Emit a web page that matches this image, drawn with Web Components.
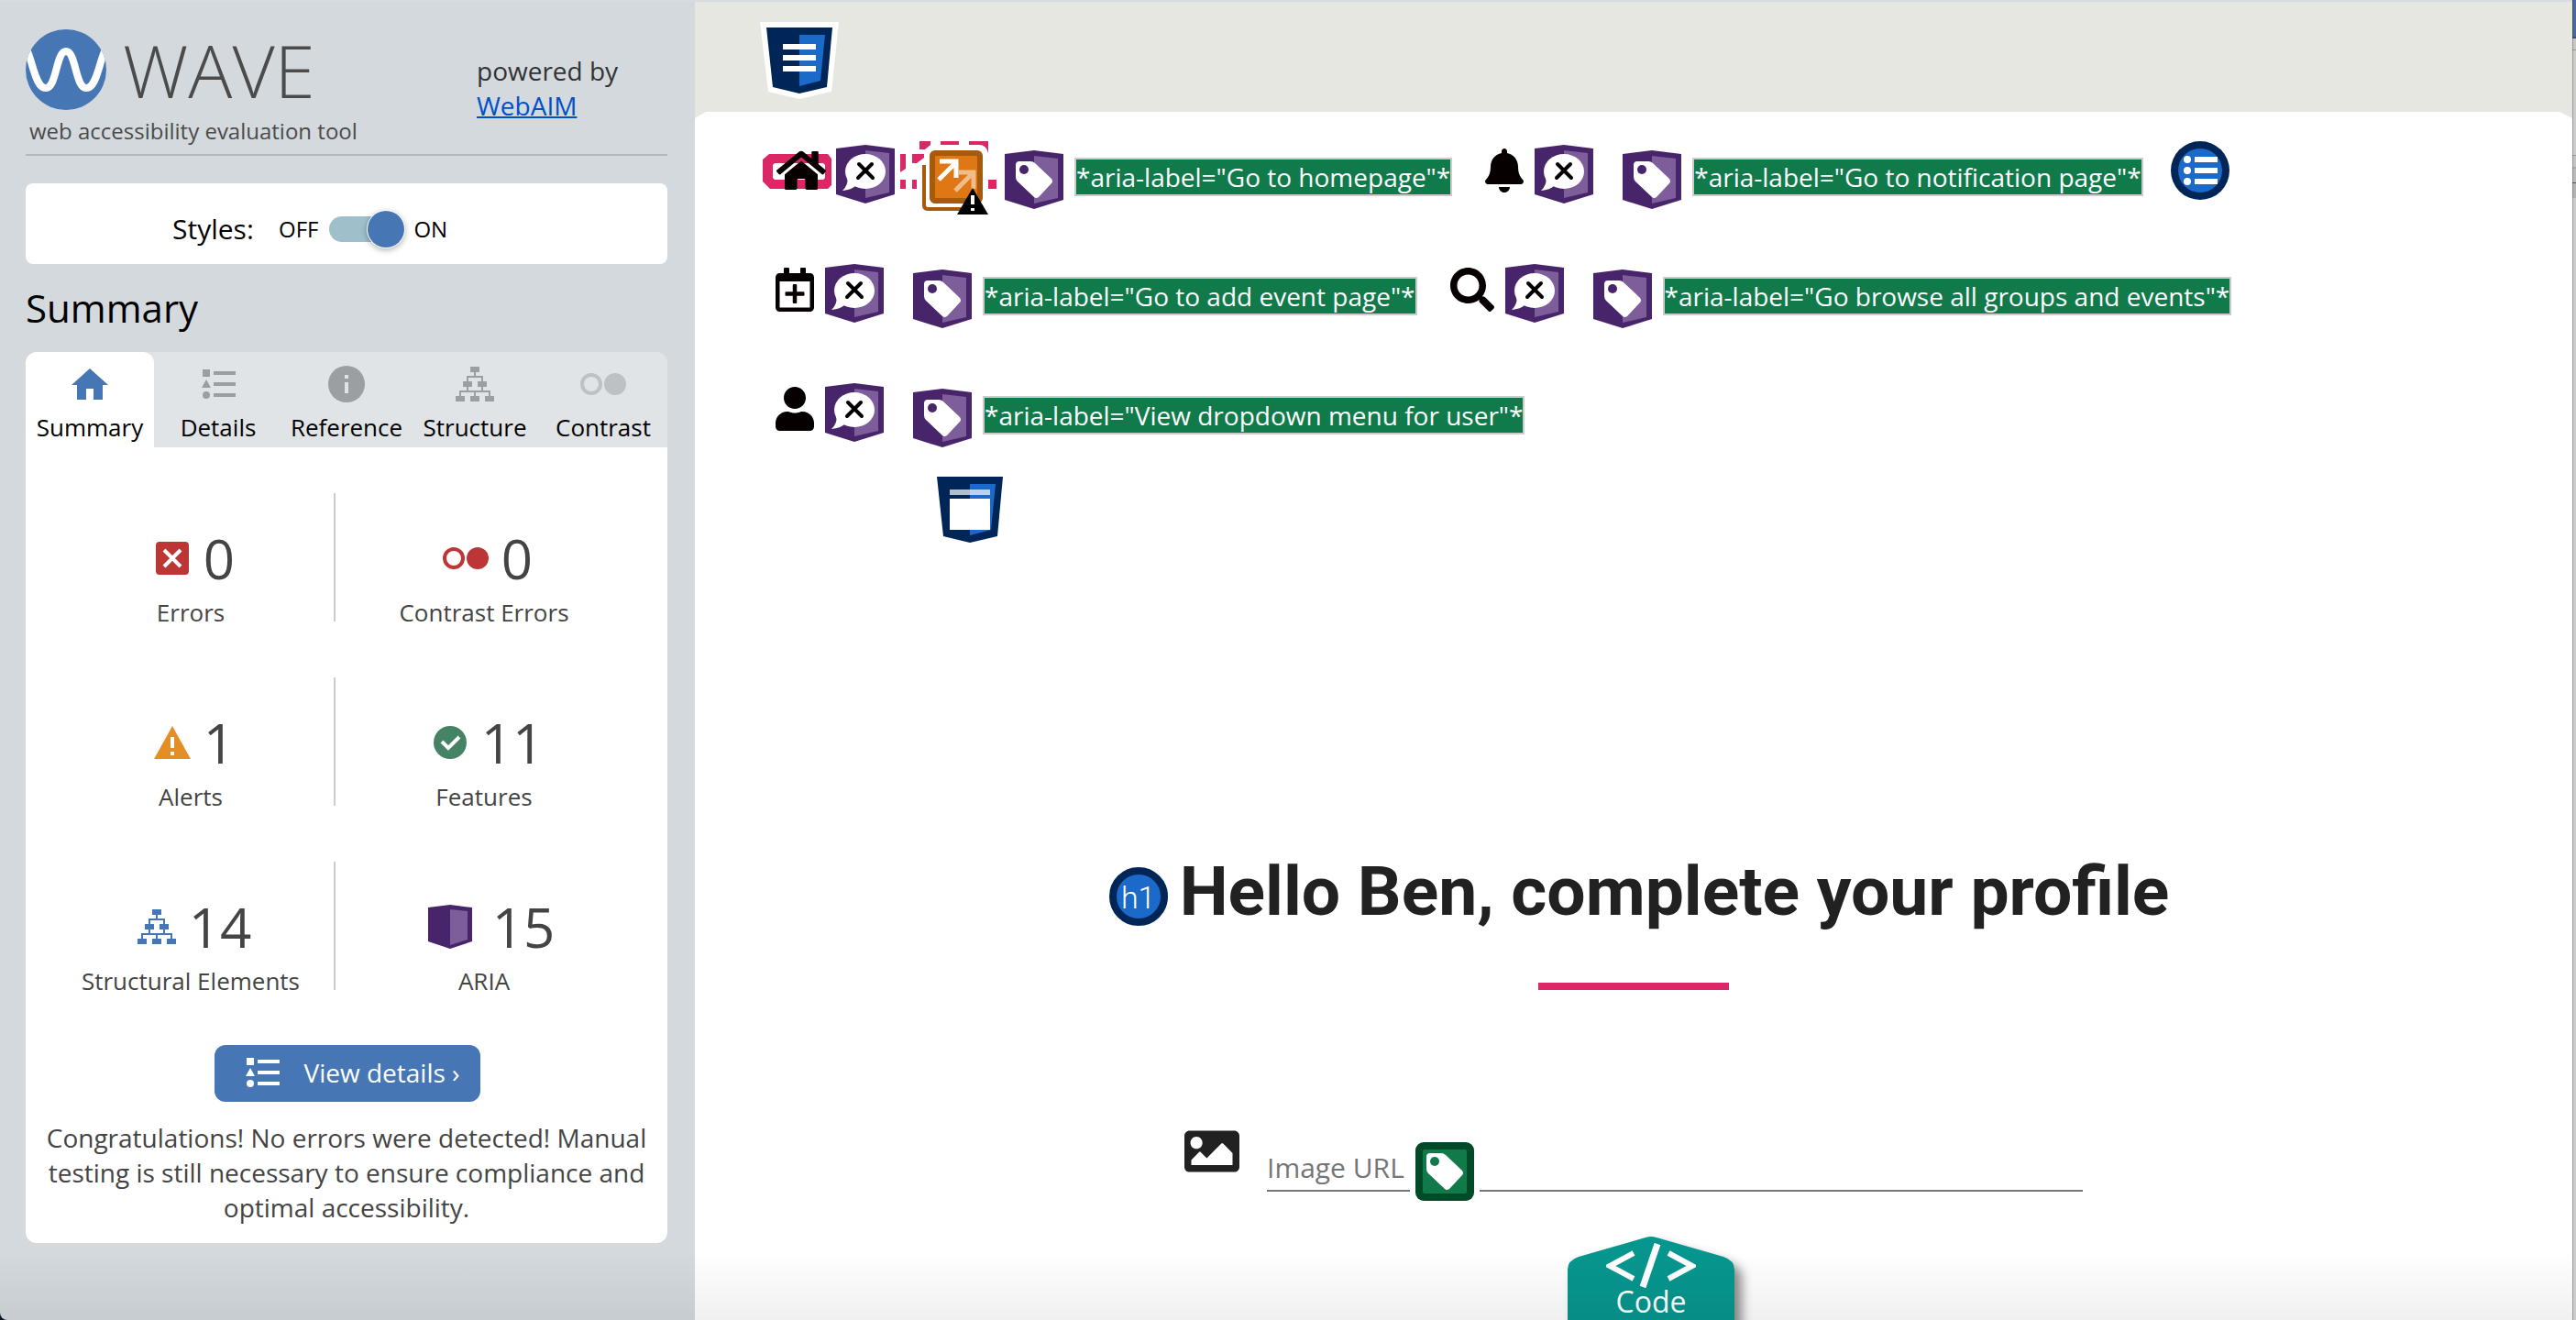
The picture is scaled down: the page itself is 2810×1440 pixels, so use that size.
<!DOCTYPE html>
<html lang="en">
<head>
<meta charset="utf-8">
<title>WAVE Web Accessibility Evaluation Tool</title>
<style>
html, body { margin: 0; }
body { font-family: "Open Sans", sans-serif; background: #0b1730; overflow: hidden; }
</style>
</head>
<body>
<wave-app></wave-app>
<script>
const TREE = '<path fill="currentColor" d="M16 0h10v6H16zM8 16h10v6H8zM24 16h10v6H24zM0 32h10v6H0zM16 32h10v6H16zM32 32h10v6H32z"/><path fill="none" stroke="currentColor" stroke-width="2" d="M21 6v5M13 16v-5h16v5M13 22v5M29 22v5M5 32v-5h32v5M21 27v5"/>';
const LIST = '<path fill="currentColor" d="M1 0h8v8H1zM5 11l5 9H0zM13 2h24v4H13zM13 14h24v4H13zM13 26h24v4H13z"/><circle cx="5" cy="28" r="4" fill="currentColor"/>';
const DUO = '<circle cx="12" cy="12" r="10" fill="none" stroke="currentColor" stroke-width="4"/><circle cx="38" cy="12" r="12" fill="currentColor"/>';
const SHIELD = '<path fill="#48246a" d="M0 4L32 0l32 4v50L32 64 0 54z"/><path fill="#7e5d9b" d="M32 6l26 3v43l-26 6z"/>';
const POCKET = '<path fill="#002657" d="M0 0h72l-6 65-30 7-29-7z"/><path fill="#1b6ac9" d="M36 8h28l-5 50-23 6z"/>';
const TAG = '<path fill="#fff" fill-rule="evenodd" d="M16 12h12q3 0 5 2l18 17q2 3 0 5L37 51q-3 2-5 0L14 34q-2-2-2-5V16q0-4 4-4z"/>';
const HOUSE = '<path fill="#060000" d="M280.37 148.26L96 300.11V464a16 16 0 0 0 16 16l112.06-.29a16 16 0 0 0 15.92-16V368a16 16 0 0 1 16-16h64a16 16 0 0 1 16 16v95.64a16 16 0 0 0 16 16.05L464 480a16 16 0 0 0 16-16V300L295.67 148.26a12.19 12.19 0 0 0-15.3 0zM571.6 251.47L488 182.56V44.05a12 12 0 0 0-12-12h-56a12 12 0 0 0-12 12v72.61L318.47 43a48 48 0 0 0-61 0L4.34 251.47a12 12 0 0 0-1.6 16.9l25.5 31A12 12 0 0 0 45.15 301l235.22-193.74a12.19 12.19 0 0 1 15.3 0L530.9 301a12 12 0 0 0 16.9-1.6l25.5-31a12 12 0 0 0-1.7-16.93z"/>';
// name: [width, height, viewBox, markup]
const ICONS = {
  logo: [88, 88, '0 0 88 88', '<clipPath id="c"><circle cx="44" cy="44" r="44"/></clipPath><circle cx="44" cy="44" r="44" fill="#4677b4"/><path clip-path="url(#c)" fill="none" stroke="#fff" stroke-width="8" d="M0 20C8 34 10 64 22 64S33 24 44 24s10 40 22 40S80 34 88 20"/>'],
  home: [40, 34, '0 0 40 34', '<path fill="currentColor" d="M20 0l20 18h-6v16H24V22h-8v12H6V18H0z"/>'],
  list: [37, 32, '0 0 37 32', LIST],
  info: [40, 40, '0 0 40 40', '<circle cx="20" cy="20" r="20" fill="currentColor"/><path fill="#e0e4e7" d="M18 10h4v4h-4zM18 18h4v12h-4z"/>'],
  tree: [42, 38, '0 0 42 38', TREE],
  duo: [50, 24, '0 0 50 24', DUO],
  error: [40, 36, '0 0 40 36', '<rect x="2" width="36" height="36" rx="4" fill="#bd3636"/><path stroke="#fff" stroke-width="4" d="M11 9l18 18M29 9L11 27"/>'],
  alert: [40, 36, '0 0 40 36', '<path fill="#e48f25" d="M20 0l20 36H0z"/><path fill="#fff" d="M18 12h4v12h-4zM18 28h4v4h-4z"/>'],
  check: [40, 36, '0 0 40 36', '<circle cx="20" cy="18" r="18" fill="#448465"/><path fill="none" stroke="#fff" stroke-width="4" d="M11 17l7 7 12-12"/>'],
  aria: [64, 48, '-8 0 64 48', '<path fill="#48246a" d="M0 3l24-3 24 3v37l-24 8-24-8z"/><path fill="#7e5d9b" d="M24 5l19 2v31l-19 6z"/>'],
  header: [86, 84, '0 0 86 84', '<path fill="#fff" d="M0 0h86l-8 76-35 8-34-8z"/><g transform="translate(7 6)">' + POCKET + '<path fill="#fff" d="M18 18h36v6H18zM18 30h36v6H18zM18 42h36v6H18z"/></g>'],
  nav: [72, 72, '0 0 72 72', POCKET + '<path fill="#fff" fill-opacity=".7" d="M14 14h44v6H14z"/><path fill="#fff" d="M14 24h44v34H14z"/>'],
  hidden: [64, 64, '0 0 64 64', SHIELD + '<ellipse cx="32" cy="29" rx="22" ry="19" fill="#fff"/><path fill="#fff" d="M12 36q2 7-5 14 10-1 14-5z"/><path stroke="#000" stroke-width="4" stroke-linecap="round" d="M25 21l15 15M39 21L24 36"/>'],
  label: [64, 64, '0 0 64 64', SHIELD + TAG + '<circle cx="21" cy="21" r="5" fill="#48246a"/>'],
  field: [64, 64, '0 0 64 64', '<rect width="64" height="64" rx="9" fill="#004a2a"/><rect x="8" y="8" width="48" height="48" rx="2" fill="#107a4b"/>' + TAG + '<circle cx="21" cy="21" r="5" fill="#107a4b"/>'],
  menu: [64, 64, '0 0 64 64', '<circle cx="32" cy="32" r="32" fill="#002657"/><circle cx="32" cy="32" r="24" fill="#1b6ac9"/><path fill="#fff" d="M26 17h25v6H26zM26 29h25v6H26zM26 41h25v6H26z"/><g fill="#fff"><circle cx="18" cy="20" r="4"/><circle cx="18" cy="32" r="4"/><circle cx="18" cy="44" r="4"/></g>'],
  brand: [75, 48, '0 0 75 48', '<path fill="#dc2767" fill-rule="evenodd" d="M7 6h64l4 5v29l-4 4H8l-8-8V12zM13 16l-2 2v14l2 2h53l2-2V18l-2-2z"/><svg x="15" width="54" height="48" viewBox="0 0 576 512">' + HOUSE + '</svg>'],
  redundant: [106, 86, '0 0 106 86', '<path fill="#dc2767" d="M0 18h6v16l-6 4zM13 18h13v4l-8 6h-5zM21 4h12v4l-6 5h-6zM44 4h20v4H44zM75 4h21v13q-2-9-10-9H75zM0 46h6v10H0zM13 46h5v10h-5zM96 46h9v10h-9z"/><path fill="none" stroke="#a55a0e" stroke-width="4" d="M26 30v44q0 4 5 4h40"/><rect x="32" y="14" width="58" height="58" rx="6" fill="#a55a0e"/><rect x="38" y="20" width="46" height="46" rx="1" fill="#df7814"/><path fill="none" stroke="#fff" stroke-width="5" d="M42 46l19-19M43 26h18v18"/><path opacity=".5" fill="none" stroke="#fff" stroke-width="5" d="M60 58l19-19M64 38h16v18"/><path d="M79 55l17 29H62z"/><path fill="#fff" d="M77 63h4v10h-4zM77 77h4v3h-4z"/>'],
  bell: [42, 48, '0 0 448 512', '<path fill="#060000" d="M224 512c35.32 0 63.97-28.65 63.97-64H160.03c0 35.35 28.65 64 63.97 64zm215.39-149.71c-19.32-20.76-55.47-51.99-55.47-154.29 0-77.7-54.48-139.9-127.94-155.16V32c0-17.67-14.32-32-31.98-32s-31.98 14.33-31.98 32v20.84C118.56 68.1 64.08 130.3 64.08 208c0 102.3-36.15 133.53-55.47 154.29-6 6.45-8.66 14.16-8.61 21.71.11 16.4 12.98 32 32.1 32h383.8c19.12 0 32-15.6 32.1-32 .05-7.55-2.61-15.27-8.61-21.71z"/>'],
  calendar: [42, 48, '0 0 448 512', '<path fill="#060000" d="M336 292v24c0 6.6-5.4 12-12 12h-76v76c0 6.6-5.4 12-12 12h-24c-6.6 0-12-5.4-12-12v-76h-76c-6.6 0-12-5.4-12-12v-24c0-6.6 5.4-12 12-12h76v-76c0-6.6 5.4-12 12-12h24c6.6 0 12 5.4 12 12v76h76c6.6 0 12 5.4 12 12zm112-180v352c0 26.5-21.5 48-48 48H48c-26.5 0-48-21.5-48-48V112c0-26.5 21.5-48 48-48h48V12c0-6.6 5.4-12 12-12h40c6.6 0 12 5.4 12 12v52h128V12c0-6.6 5.4-12 12-12h40c6.6 0 12 5.4 12 12v52h48c26.5 0 48 21.5 48 48zm-48 346V160H48v298c0 3.3 2.7 6 6 6h340c3.3 0 6-2.7 6-6z"/>'],
  search: [48, 48, '0 0 512 512', '<path fill="#060000" d="M505 442.7L405.3 343c-4.5-4.5-10.6-7-17-7H372c27.6-35.3 44-79.7 44-128C416 93.1 322.9 0 208 0S0 93.1 0 208s93.1 208 208 208c48.3 0 92.7-16.4 128-44v16.3c0 6.4 2.5 12.5 7 17l99.7 99.7c9.4 9.4 24.6 9.4 33.9 0l28.3-28.3c9.4-9.4 9.4-24.6.1-34zM208 336c-70.7 0-128-57.2-128-128 0-70.7 57.2-128 128-128 70.7 0 128 57.2 128 128 0 70.7-57.2 128-128 128z"/>'],
  user: [42, 48, '0 0 448 512', '<path fill="#060000" d="M224 256c70.7 0 128-57.3 128-128S294.7 0 224 0 96 57.3 96 128s57.3 128 128 128zm89.6 32h-16.7c-22.2 10.2-46.9 16-72.9 16s-50.6-5.8-72.9-16h-16.7C60.2 288 0 348.2 0 422.4V464c0 26.5 21.5 48 48 48h352c26.5 0 48-21.5 48-48v-41.6c0-74.2-60.2-134.4-134.4-134.4z"/>'],
  image: [60, 60, '0 0 512 512', '<path fill="#212121" d="M464 448H48c-26.51 0-48-21.49-48-48V112c0-26.51 21.49-48 48-48h416c26.51 0 48 21.49 48 48v288c0 26.51-21.49 48-48 48zM112 120c-30.928 0-56 25.072-56 56s25.072 56 56 56 56-25.072 56-56-25.072-56-56-56zM64 384h384V272l-87.515-87.515c-4.686-4.686-12.284-4.686-16.971 0L208 320l-55.515-55.515c-4.686-4.686-12.284-4.686-16.971 0L64 336v48z"/>'],
  code: [98, 50, '0 0 98 50', '<path fill="none" stroke="#fff" stroke-width="6" d="M30 11L4 25l26 14M68 11l26 14-26 14"/><path stroke="#fff" stroke-width="7" d="M40 48L56 1"/>']
};

function define(name, html) {
  const t = document.createElement('template');
  t.innerHTML = html;
  customElements.define(name, class extends HTMLElement {
    constructor() {
      super();
      this.attachShadow({ mode: 'open' }).append(t.content.cloneNode(true));
    }
  });
}

customElements.define('wave-icon', class extends HTMLElement {
  connectedCallback() {
    if (this.shadowRoot) return;
    const [w, h, box, body] = ICONS[this.getAttribute('name')];
    this.attachShadow({ mode: 'open' }).innerHTML =
      '<style>:host{display:inline-flex;flex:none}svg{display:block}</style>' +
      '<svg width="' + w + '" height="' + h + '" viewBox="' + box + '" aria-hidden="true">' + body + '</svg>';
  }
});

define('wave-brand', `<style>
:host { display: flex; border-bottom: 2px solid #b3b8bc; padding: 30px 0 8px; color: #4b4b4b; }
.name { width: 492px; }
.row { display: flex; align-items: center; gap: 18px; }
.word { font-size: 80px; font-weight: 300; line-height: 88px; }
p { margin: 0; }
.tagline { font-size: 24px; line-height: 34px; margin: 6px 0 0 4px; }
.by { font-size: 28px; line-height: 38px; color: #333; padding-top: 26px; }
a { color: #0050c8; text-decoration-thickness: 2px; }
</style>
<div class="name"><div class="row"><wave-icon name="logo"></wave-icon><span class="word">WAVE</span></div>
<p class="tagline">web accessibility evaluation tool</p></div>
<p class="by">powered by<br><a href="#webaim">WebAIM</a></p>`);

define('wave-toggle', `<style>
:host { display: flex; align-items: center; background: #fff; border-radius: 8px; height: 78px; padding: 10px 0 0 160px; margin-top: 30px; color: #000; }
label { font-size: 30px; width: 116px; }
span { font-size: 24px; }
input { appearance: none; margin: 2px 10px 0 12px; width: 82px; height: 40px; position: relative; }
input::before { content: ""; position: absolute; inset: 6px 10px 6px 0; border-radius: 14px; background: #9fbfca; }
input::after { content: ""; position: absolute; top: 0; right: 0; width: 40px; height: 40px; border-radius: 50%; background: #4677b4; box-shadow: 0 0 0 1px #fff, 0 2px 6px 1px rgba(0,0,0,.3); }
</style>
<label for="styles">Styles:</label><span>OFF</span><input id="styles" type="checkbox" role="switch" checked><span>ON</span>`);

define('wave-tab', `<style>
:host { display: block; flex: 1; color: #9b9fa1; }
:host([selected]) { color: #4677b4; }
:host([soft]) { color: #bcc1c4; }
button { width: 100%; border: 0; padding: 11px 0 4px; background: none; font: inherit; font-size: 26px; line-height: 36px; color: inherit; display: flex; flex-direction: column; align-items: center; gap: 5px; border-radius: 12px 12px 0 0; }
:host([selected]) button { background: #fff; }
.pic { display: flex; height: 48px; align-items: center; }
.text { color: #000; }
</style>
<button type="button"><span class="pic"><slot name="icon"></slot></span><span class="text"><slot></slot></span></button>`);

define('wave-stat', `<style>
:host { display: block; height: 99px; padding-top: 41px; text-align: center; color: #444; }
:host([line]) { border-right: 2px solid #ccc; margin-right: 2px; padding-left: 4px; }
.row { display: flex; justify-content: center; align-items: center; gap: 14px; padding-left: 8px; font-size: 60px; line-height: 60px; }
.text { font-size: 26px; line-height: 36px; margin-top: 11px; }
</style>
<div class="row"><slot name="icon"></slot><slot name="count"></slot></div><div class="text"><slot></slot></div>`);

define('wave-summary', `<style>
:host { display: block; }
h2 { margin: 20px 0; font-size: 42px; line-height: 56px; font-weight: 400; color: #000; }
nav { display: flex; background: #e0e4e7; border-radius: 12px 12px 0 0; }
.panel { background: #fff; border-radius: 0 0 12px 12px; padding: 50px 20px 20px; text-align: center; }
.stats { display: grid; grid-template-columns: 1fr 1fr; row-gap: 61px; margin-right: 20px; }
.red { color: #bd3636; } .blue { color: #4677b4; }
button { margin: 60px 0 0 2px; height: 62px; border: 0; border-radius: 12px; background: #4677b4; color: #fff; font: inherit; font-size: 28px; padding: 0 22px 2px 34px; display: inline-flex; align-items: center; gap: 26px; }
p { margin: 20px 0 0; font-size: 28px; line-height: 38px; color: #444; }
</style>
<h2>Summary</h2>
<nav>
<wave-tab selected><wave-icon slot="icon" name="home"></wave-icon>Summary</wave-tab>
<wave-tab><wave-icon slot="icon" name="list"></wave-icon>Details</wave-tab>
<wave-tab><wave-icon slot="icon" name="info"></wave-icon>Reference</wave-tab>
<wave-tab><wave-icon slot="icon" name="tree"></wave-icon>Structure</wave-tab>
<wave-tab soft><wave-icon slot="icon" name="duo"></wave-icon>Contrast</wave-tab>
</nav>
<div class="panel">
<div class="stats">
<wave-stat line><wave-icon slot="icon" name="error"></wave-icon><span slot="count">0</span>Errors</wave-stat>
<wave-stat><wave-icon slot="icon" class="red" name="duo"></wave-icon><span slot="count">0</span>Contrast Errors</wave-stat>
<wave-stat line><wave-icon slot="icon" name="alert"></wave-icon><span slot="count">1</span>Alerts</wave-stat>
<wave-stat><wave-icon slot="icon" name="check"></wave-icon><span slot="count">11</span>Features</wave-stat>
<wave-stat line><wave-icon slot="icon" class="blue" name="tree"></wave-icon><span slot="count">14</span>Structural Elements</wave-stat>
<wave-stat><wave-icon slot="icon" name="aria"></wave-icon><span slot="count">15</span>ARIA</wave-stat>
</div>
<button type="button"><wave-icon name="list"></wave-icon>View details ›</button>
<p>Congratulations! No errors were detected! Manual testing is still necessary to ensure compliance and optimal accessibility.</p>
</div>`);

define('aria-note', `<style>
:host { display: block; flex: none; background: #107a4b; border: 2px solid #ccc; color: #fff; font-size: 28px; line-height: 38px; white-space: nowrap; margin-top: 18px; }
</style><slot></slot>`);

define('page-nav', `<style>
:host { display: block; padding: 32px 0 0 88px; }
.row { display: flex; align-items: flex-start; min-height: 130px; }
.row.first { margin-left: -14px; }
.row.last { min-height: 106px; }
a { display: flex; flex: none; padding-top: 8px; margin-right: 12px; }
a.home { margin-right: 5px; }
[name=hidden] { margin: 4px 32px 0 0; }
.home + [name=hidden] { margin-right: 6px; }
[name=redundant] { margin: -4px 8px 0 0; }
[name=label] { margin: 10px 12px 0 0; }
aria-note { margin-right: 36px; }
aria-note.end { margin-right: 30px; }
.region { padding-left: 176px; display: flex; }
</style>
<div class="row first">
<a class="home" href="#home" aria-label="Go to homepage"><wave-icon name="brand"></wave-icon></a><wave-icon name="hidden"></wave-icon><wave-icon name="redundant"></wave-icon><wave-icon name="label"></wave-icon><aria-note>*aria-label="Go to homepage"*</aria-note>
<a href="#notifications" aria-label="Go to notification page"><wave-icon name="bell"></wave-icon></a><wave-icon name="hidden"></wave-icon><wave-icon name="label"></wave-icon><aria-note class="end">*aria-label="Go to notification page"*</aria-note><wave-icon name="menu"></wave-icon>
</div>
<div class="row">
<a href="#add" aria-label="Go to add event page"><wave-icon name="calendar"></wave-icon></a><wave-icon name="hidden"></wave-icon><wave-icon name="label"></wave-icon><aria-note>*aria-label="Go to add event page"*</aria-note>
<a href="#browse" aria-label="Go browse all groups and events"><wave-icon name="search"></wave-icon></a><wave-icon name="hidden"></wave-icon><wave-icon name="label"></wave-icon><aria-note>*aria-label="Go browse all groups and events"*</aria-note>
</div>
<div class="row last">
<a href="#user" aria-label="View dropdown menu for user"><wave-icon name="user"></wave-icon></a><wave-icon name="hidden"></wave-icon><wave-icon name="label"></wave-icon><aria-note>*aria-label="View dropdown menu for user"*</aria-note>
</div>
<div class="region"><wave-icon name="nav"></wave-icon></div>`);

define('page-title', `<style>
:host { display: flex; flex-direction: column; align-items: center; margin-top: 330px; }
.row { display: flex; align-items: center; gap: 13px; padding-left: 12px; }
.badge { width: 48px; height: 48px; border: 8px solid #002657; border-radius: 50%; background: #1b6ac9; color: #fff; font: 300 34px/50px Roboto, sans-serif; text-align: center; margin-top: 12px; }
h1 { margin: 0; font: 700 75px/100px Roboto, sans-serif; color: #212121; white-space: nowrap; }
.rule { width: 208px; height: 8px; background: #dc2767; margin-top: 50px; }
</style>
<div class="row"><span class="badge">h1</span><h1>Hello Ben, complete your profile</h1></div><div class="rule"></div>`);

define('page-field', `<style>
:host { display: flex; align-items: flex-start; width: 980px; margin: 146px auto 0; }
.entry { display: flex; flex: 1; margin-left: 30px; padding-top: 20px; }
label { box-sizing: border-box; height: 54px; padding-right: 6px; border-bottom: 2px solid #757575; font-size: 30px; line-height: 56px; color: #757575; white-space: nowrap; }
wave-icon[name=field] { margin: 0 6px; }
input { flex: 1; min-width: 0; box-sizing: border-box; height: 54px; border: 0; border-bottom: 2px solid #757575; background: none; font: inherit; font-size: 30px; padding: 0; }
</style>
<wave-icon name="image"></wave-icon>
<div class="entry"><label for="url">Image URL</label><wave-icon name="field"></wave-icon><input id="url" type="text"></div>`);

define('code-tab', `<style>
:host { position: absolute; left: 0; right: 0; bottom: 0; display: flex; justify-content: center; height: 91px; padding-left: 38px; overflow: hidden; }
button { position: relative; width: 182px; height: 91px; border: 0; padding: 7px 0 0; background: none; color: #fff; font: inherit; font-size: 32px; line-height: 28px; display: flex; flex-direction: column; align-items: center; }
svg { position: absolute; left: 0; top: 0; overflow: visible; filter: drop-shadow(8px 8px 6px rgba(0,0,0,.45)); }
wave-icon, span { position: relative; }
</style>
<button type="button"><svg width="182" height="130" aria-hidden="true"><path fill="#06968e" d="M0 140V36q0-10 12-14L85 1q6-2 12 0l73 21q12 4 12 14v104z"/></svg><wave-icon name="code"></wave-icon><span>Code</span></button>`);

define('wave-app', `<style>
:host { display: flex; min-height: 100vh; position: relative; box-sizing: border-box; border-top: 2px solid #d7dbe2; }
aside { box-sizing: border-box; width: 758px; flex: none; padding: 0 30px 0 28px; background: #d4d9dd; border-bottom-left-radius: 8px; }
main { flex: 1; min-width: 0; position: relative; background: #e6e7e1; }
header { padding: 22px 0 0 71px; height: 98px; }
.sheet { background: #fff; min-height: calc(100vh - 122px); clip-path: polygon(0 7px, 12px 0, calc(100% - 14px) 0, 100% 7px, 100% 100%, 0 100%); }
.edge { width: 4px; margin-top: -2px; flex: none; background: linear-gradient(90deg, rgba(0,0,0,.25) 0 1px, rgba(0,0,0,0) 1px), linear-gradient(#4b6a97 0 40px, #34507f 40px 42px, #c8c8c8 42px 54px, #999 54px 55px, #cdcdcd 55px 169px, #999 169px 170px, #c4c4c4 170px 182px, #aaa 182px 184px, #bbb 184px 199px, #555 199px 200px, #b4b4b4 200px 216px, #ccc 216px); }
.fade { position: absolute; left: 0; right: 4px; bottom: 0; height: 76px; background: linear-gradient(rgba(0,0,0,0), rgba(0,0,0,.06)); pointer-events: none; }
</style>
<aside><wave-brand></wave-brand><wave-toggle></wave-toggle><wave-summary></wave-summary></aside>
<main><header><wave-icon name="header"></wave-icon></header>
<div class="sheet"><page-nav></page-nav><page-title></page-title><page-field></page-field></div><code-tab></code-tab></main>
<div class="edge"></div><div class="fade"></div>`);
</script>
</body>
</html>
